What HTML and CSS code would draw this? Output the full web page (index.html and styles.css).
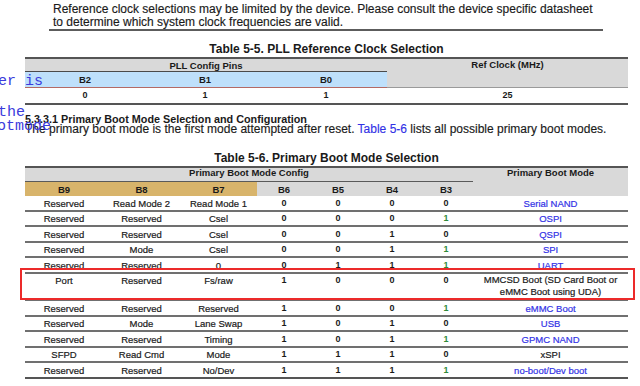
FILE: index.html
```html
<!DOCTYPE html>
<html>
<head>
<meta charset="utf-8">
<link rel="stylesheet" href="styles.css">
</head>
<body>
<div class="page">
  <p class="note">Reference clock selections may be limited by the device. Please consult the device specific datasheet<br>to determine which system clock frequencies are valid.</p>

  <div class="caption cap55">Table 5-5. PLL Reference Clock Selection</div>
  <table class="tbl t55">
    <colgroup><col class="w120"><col class="w120"><col class="w122"><col class="w241"></colgroup>
    <tr class="h1"><th colspan="3" class="grp">PLL Config Pins</th><th rowspan="2" class="ref">Ref Clock (MHz)</th></tr>
    <tr class="h2"><th class="bl">B2</th><th class="bl">B1</th><th class="bl">B0</th></tr>
    <tr class="d"><td>0</td><td>1</td><td>1</td><td>25</td></tr>
  </table>

  <h4 class="sub">5.3.3.1 Primary Boot Mode Selection and Configuration</h4>
  <p class="body">The primary boot mode is the first mode attempted after reset. <span class="link">Table 5-6</span> lists all possible primary boot modes.</p>

  <div class="caption cap56">Table 5-6. Primary Boot Mode Selection</div>
  <table class="tbl t56">
    <colgroup><col class="w78"><col class="w77"><col class="w77"><col class="w54"><col class="w54"><col class="w54"><col class="w54"><col class="w155"></colgroup>
    <tr class="h1"><th colspan="7" class="grp">Primary Boot Mode Config</th><th rowspan="2" class="mode">Primary Boot Mode</th></tr>
    <tr class="h2"><th class="tan">B9</th><th class="tan">B8</th><th class="tan">B7</th><th>B6</th><th>B5</th><th>B4</th><th>B3</th></tr>
    <tr class="r16"><td>Reserved</td><td>Read Mode 2</td><td>Read Mode 1</td><td class="n">0</td><td class="n">0</td><td class="n">0</td><td class="n">0</td><td class="lk">Serial NAND</td></tr>
    <tr class="r15"><td>Reserved</td><td>Reserved</td><td>Csel</td><td class="n">0</td><td class="n">0</td><td class="n">0</td><td class="n g">1</td><td class="lk">OSPI</td></tr>
    <tr class="r16"><td>Reserved</td><td>Reserved</td><td>Csel</td><td class="n">0</td><td class="n">0</td><td class="n">1</td><td class="n">0</td><td class="lk">QSPI</td></tr>
    <tr class="r15"><td>Reserved</td><td>Mode</td><td>Csel</td><td class="n">0</td><td class="n">0</td><td class="n">1</td><td class="n g">1</td><td class="lk">SPI</td></tr>
    <tr class="r16"><td>Reserved</td><td>Reserved</td><td>0</td><td class="n">0</td><td class="n">1</td><td class="n">1</td><td class="n g">1</td><td class="lk">UART</td></tr>
    <tr class="r27 top"><td>Port</td><td>Reserved</td><td>Fs/raw</td><td class="n">1</td><td class="n">0</td><td class="n">0</td><td class="n">0</td><td class="two">MMCSD Boot (SD Card Boot or<br>eMMC Boot using UDA)</td></tr>
    <tr class="r16"><td>Reserved</td><td>Reserved</td><td>Reserved</td><td class="n">1</td><td class="n">0</td><td class="n">0</td><td class="n g">1</td><td class="lk">eMMC Boot</td></tr>
    <tr class="r15"><td>Reserved</td><td>Mode</td><td>Lane Swap</td><td class="n">1</td><td class="n">0</td><td class="n">1</td><td class="n">0</td><td class="lk">USB</td></tr>
    <tr class="r16"><td>Reserved</td><td>Reserved</td><td>Timing</td><td class="n">1</td><td class="n">0</td><td class="n">1</td><td class="n g">1</td><td class="lk">GPMC NAND</td></tr>
    <tr class="r15"><td>SFPD</td><td>Read Cmd</td><td>Mode</td><td class="n">1</td><td class="n">1</td><td class="n">1</td><td class="n">0</td><td>xSPI</td></tr>
    <tr class="r14 last"><td>Reserved</td><td>Reserved</td><td>No/Dev</td><td class="n">1</td><td class="n">1</td><td class="n">1</td><td class="n g">1</td><td class="lk">no-boot/Dev boot</td></tr>
  </table>

  <div class="highlight"></div>
  <div class="code code1">er is</div>
  <div class="code code2">the</div>
  <div class="code code3">otmode</div>
</div>
</body>
</html>
```

FILE: styles.css
```css
html, body {
  margin: 0;
  padding: 0;
  background: #ffffff;
}

.page {
  position: relative;
  width: 640px;
  height: 386px;
  overflow: hidden;
  font-family: "Liberation Sans", Arial, sans-serif;
  color: #1a1a1a;
}

.note {
  margin: 0 0 0 49px;
  width: 550px;
  padding: 3px 0 0 4px;
  font-size: 12px;
  line-height: 13px;
  white-space: nowrap;
  border-bottom: 2px solid #5c5c5c;
  -webkit-text-stroke: 0.15px #1a1a1a;
}

.caption {
  margin-left: 25px;
  width: 603px;
  text-align: center;
  font-weight: bold;
  font-size: 12px;
  line-height: 14px;
}

.cap55 {
  margin-top: 11px;
  margin-bottom: 1px;
}

.cap56 {
  margin-top: 16px;
  margin-bottom: 1px;
}

.tbl {
  margin-left: 25px;
  width: 603px;
  table-layout: fixed;
  border-collapse: separate;
  border-spacing: 0;
  border-top: 2px solid #555555;
  border-bottom: 2px solid #555555;
}

.tbl th,
.tbl td {
  padding: 0;
  text-align: center;
  vertical-align: middle;
  white-space: nowrap;
  overflow: hidden;
}

.tbl th {
  font-size: 9.5px;
  font-weight: bold;
  line-height: 11px;
  color: #1a1a1a;
}

.w120 { width: 120px; }
.w122 { width: 122px; }
.w241 { width: 241px; }
.w78 { width: 78px; }
.w77 { width: 77px; }
.w54 { width: 54px; }
.w155 { width: 155px; }

/* Table 5-5 */
.t55 .h1 { height: 13px; }
.t55 .h2 { height: 16px; }
.t55 .d { height: 15px; }

.t55 .grp {
  background: #d9d9d9;
  border-bottom: 1px solid #4a4a4a;
}

.t55 .ref {
  background: #d9d9d9;
  vertical-align: top;
  line-height: 12px;
  border-bottom: 1px solid #9a9a9a;
}

.t55 .bl {
  background: #bee0fb;
  border-bottom: 1px solid #b46a64;
}

.t55 td {
  font-size: 9px;
  font-weight: bold;
  line-height: 11px;
}

/* Table 5-6 */
.t56 .h1 { height: 14px; }
.t56 .h2 { height: 14px; }

.t56 .grp {
  background: #d9d9d9;
  border-bottom: 1px solid #5a5a5a;
  vertical-align: top;
  line-height: 10px;
}

.t56 .h2 th {
  background: #d9d9d9;
}

.t56 .h2 th.tan {
  background: #d8b46b;
}

.t56 .mode {
  background: #d9d9d9;
  vertical-align: top;
  line-height: 10px;
}

.t56 td {
  font-size: 9.5px;
  line-height: 11px;
  border-bottom: 2px solid #707070;
  color: #1a1a1a;
  -webkit-text-stroke: 0.2px currentColor;
}

.t56 td.n {
  font-weight: bold;
  font-size: 9px;
  -webkit-text-stroke: 0;
}

.t56 td.g {
  color: #2f8a3a;
}

.t56 td.lk {
  color: #3232e6;
}

.t56 .last td {
  border-bottom: none;
}

.r14 { height: 14px; }
.r15 { height: 15px; }
.r16 { height: 16px; }
.r27 { height: 27px; }

.t56 .top td {
  vertical-align: top;
  padding-top: 1px;
}

.t56 td.two {
  line-height: 12px;
  padding-top: 0;
}

.sub {
  margin: 9px 0 0 25px;
  font-size: 10.8px;
  font-weight: bold;
  line-height: 10px;
}

.body {
  margin: -1px 0 0 25px;
  font-size: 12px;
  line-height: 12px;
  white-space: nowrap;
  -webkit-text-stroke: 0.15px #1a1a1a;
}

.link {
  color: #3232e6;
  -webkit-text-stroke: 0.15px #3232e6;
}

.highlight {
  position: absolute;
  left: 20px;
  top: 268px;
  width: 615px;
  height: 32px;
  box-sizing: border-box;
  border: 2px solid #ec2a2a;
}

.code {
  position: absolute;
  font-family: "Liberation Mono", "DejaVu Sans Mono", monospace;
  font-size: 15px;
  line-height: 15px;
  color: #3b3bdc;
  white-space: pre;
}

.code1 { left: -2px; top: 74px; }
.code2 { left: -2px; top: 105px; }
.code3 { left: -3px; top: 119px; }
```
